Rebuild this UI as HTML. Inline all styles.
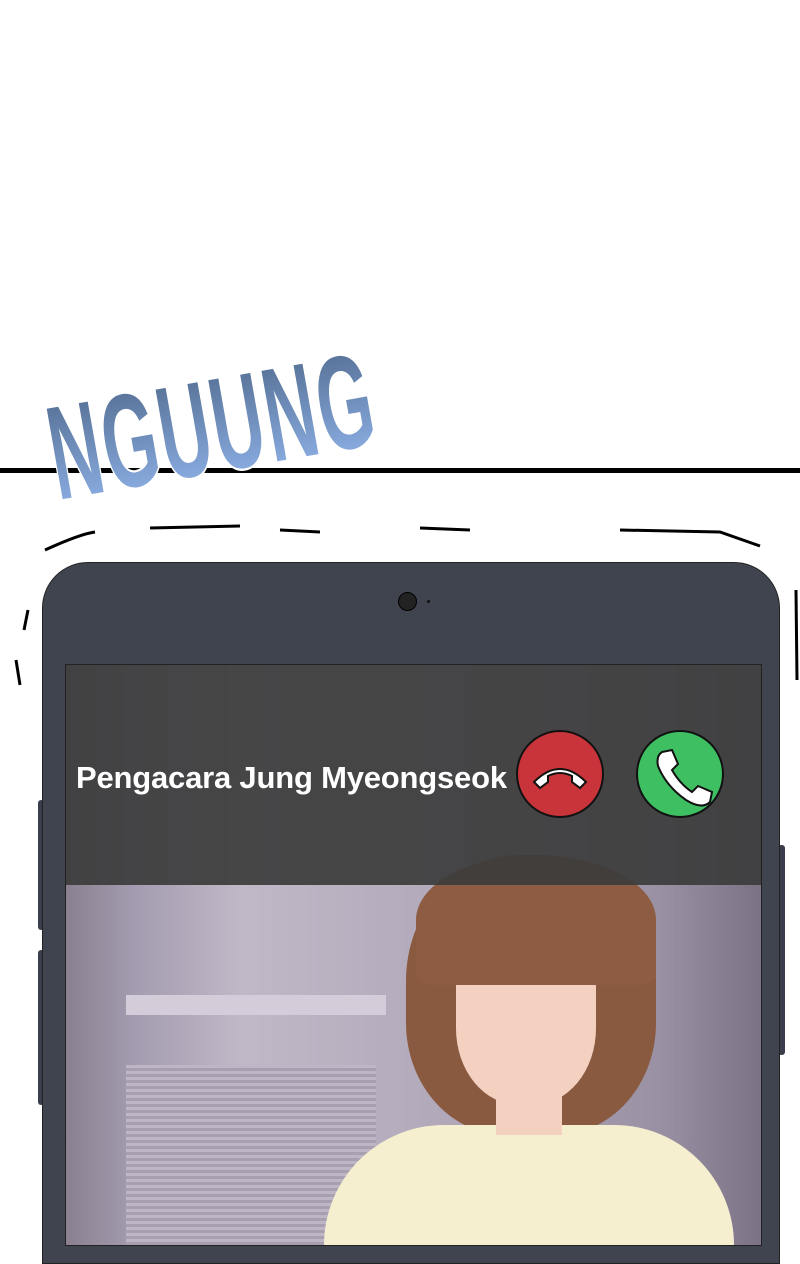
<!DOCTYPE html>
<html><head><meta charset="utf-8"><style>
body{margin:0;width:800px;height:1240px;overflow:hidden;background:#fff;position:relative;font-family:"Liberation Sans",sans-serif}
div{position:absolute}
</style></head><body>
<div style="left:0;top:468px;width:800px;height:5px;background:#000"></div>
<svg style="position:absolute;left:0;top:350px" width="440" height="170">
<defs><linearGradient id="g" x1="0" y1="0" x2="0" y2="1"><stop offset="0" stop-color="#4d6688"/><stop offset="1" stop-color="#94b8f0"/></linearGradient></defs>
<g transform="translate(58,150) rotate(-10) scale(1.22,2.3)">
<text x="0" y="0" font-family="Liberation Sans Narrow, Liberation Sans, sans-serif" font-size="58" font-weight="bold" fill="url(#g)" stroke="#fff" stroke-width="2" paint-order="stroke" letter-spacing="2">NGUUNG</text></g>
</svg>
<svg style="position:absolute;left:0;top:520px" width="800" height="180">
<path d="M45 30 Q80 14 95 12 M150 8 L240 6 M280 10 L320 12 M420 8 L470 10 M620 10 L720 12 L760 26 M28 90 L24 110 M16 140 L20 165 M796 70 L797 160" stroke="#000" stroke-width="3" fill="none"/>
</svg>
<div style="left:38px;top:800px;width:6px;height:130px;background:#3a3e4c;border-radius:3px"></div>
<div style="left:38px;top:950px;width:6px;height:155px;background:#3a3e4c;border-radius:3px"></div>
<div style="left:778px;top:845px;width:7px;height:210px;background:#3a3e4c;border-radius:3px"></div>
<div style="left:42px;top:562px;width:736px;height:700px;background:#40444f;border:1px solid #222;border-radius:46px 46px 0 0"></div>
<div style="left:398px;top:592px;width:17px;height:17px;border-radius:50%;background:#222;border:1px solid #000"></div>
<div style="left:427px;top:600px;width:3px;height:3px;border-radius:50%;background:#111"></div>
<div style="left:65px;top:664px;width:695px;height:580px;background:linear-gradient(90deg,#8a8090 0%,#a49cb0 10%,#c0b8c6 25%,#b4acbc 50%,#9a92a4 85%,#7c7286 100%);border:1px solid #222;overflow:hidden">
 <div style="left:60px;top:400px;width:250px;height:180px;background:repeating-linear-gradient(0deg,#a8a0b0 0 3px,#beb6c4 3px 6px)"></div>
 <div style="left:60px;top:330px;width:260px;height:20px;background:#d4ccd8"></div>
 <div style="left:340px;top:190px;width:250px;height:280px;border-radius:45% 45% 40% 40%;background:#8a5a40"></div>
 <div style="left:390px;top:270px;width:140px;height:170px;border-radius:30% 30% 45% 45%;background:#f3d0c0"></div>
 <div style="left:350px;top:190px;width:240px;height:130px;border-radius:50% 50% 8% 8%;background:#8e5c42"></div>
 <div style="left:258px;top:460px;width:410px;height:140px;border-radius:120px 120px 0 0;background:#f5efd0"></div>
 <div style="left:430px;top:415px;width:66px;height:55px;background:#f3d0c0"></div>
 <div style="left:0;top:0;width:695px;height:220px;background:rgba(60,60,60,.92)"></div>
</div>
<div style="left:76px;top:760px;color:#fff;font-weight:bold;font-size:31px;letter-spacing:-0.2px;white-space:nowrap">Pengacara Jung Myeongseok</div>
<div style="left:516px;top:730px;width:84px;height:84px;border-radius:50%;background:#c8343a;border:2px solid #111"></div>
<div style="left:636px;top:730px;width:84px;height:84px;border-radius:50%;background:#3ebf62;border:2px solid #111"></div>
<svg style="position:absolute;left:516px;top:730px" width="210" height="90">
<path d="M18 52 Q44 26 70 52 L64 58 L56 52 L56 46 Q44 40 32 46 L32 52 L24 58 Z" fill="#fff" stroke="#111" stroke-width="2"/>
<path d="M146 22 L156 20 L162 34 L156 40 Q164 54 176 62 L182 56 L196 62 L194 72 Q186 80 170 70 Q150 56 142 36 Q140 26 146 22 Z" fill="#fff" stroke="#111" stroke-width="2"/>
</svg>
</body></html>
